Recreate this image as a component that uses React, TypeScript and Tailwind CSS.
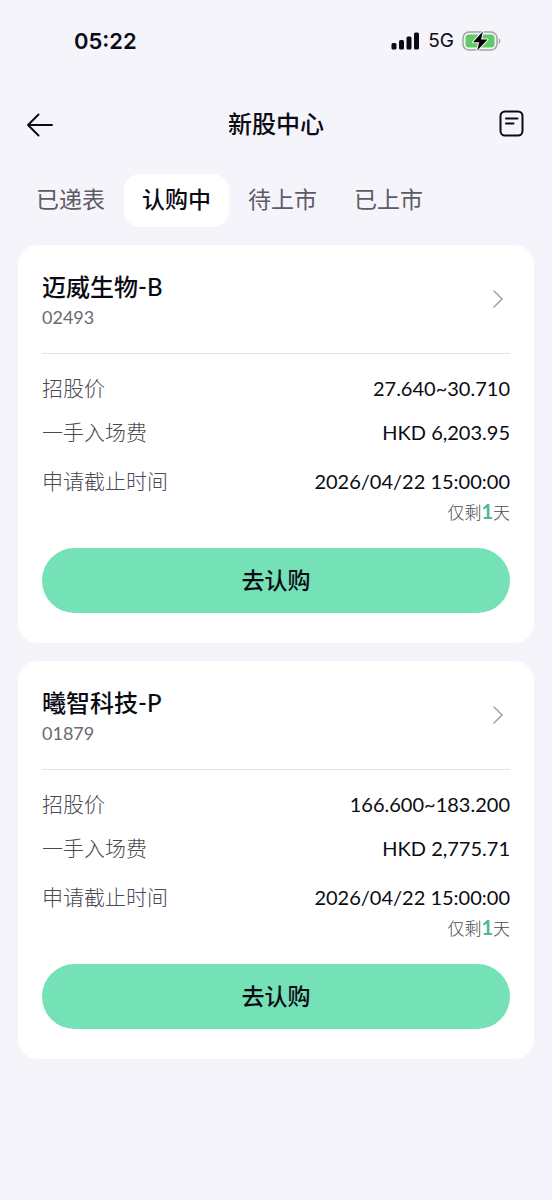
interface Stock {
  code: string;
  name: string;
  price: string;
  fee: string;
  deadline: string;
  daysLeft: number;
}

const tabs = ['已递表', '认购中', '待上市', '已上市'];

const stocks: Stock[] = [
  {
    code: '02493',
    name: '迈威生物-B',
    price: '27.640~30.710',
    fee: 'HKD 6,203.95',
    deadline: '2026/04/22 15:00:00',
    daysLeft: 1,
  },
  {
    code: '01879',
    name: '曦智科技-P',
    price: '166.600~183.200',
    fee: 'HKD 2,775.71',
    deadline: '2026/04/22 15:00:00',
    daysLeft: 1,
  },
];

function StatusBar() {
  return (
    <div className="flex h-[82px] items-center justify-between pr-[50px] pl-[74px]">
      <span className="font-['Inter',sans-serif] text-[22px] font-semibold">05:22</span>
      <div className="flex items-center gap-2">
        <svg width="29" height="18" viewBox="0 0 29 18" fill="currentColor" aria-hidden="true">
          <rect x="0.5" y="11" width="5" height="6.5" rx="1.5" />
          <rect x="8" y="8" width="5" height="9.5" rx="1.5" />
          <rect x="15.5" y="4.5" width="5" height="13" rx="1.5" />
          <rect x="23" y="0.5" width="5" height="17" rx="1.5" />
        </svg>
        <span className="font-['Inter',sans-serif] text-[19px]">5G</span>
        <svg width="40" height="22" viewBox="0 0 40 22" aria-hidden="true">
          <rect x="1" y="2" width="34" height="18" rx="6" fill="none" stroke="#a3a3a8" strokeWidth="1.5" />
          <rect x="3.5" y="4.5" width="29" height="13" rx="3.5" fill="#62cb66" />
          <path d="M36.8 8.2c2 .6 2 5 0 5.6z" fill="#a3a3a8" />
          <path
            d="M20.8 1.5 11 12.2h6.2l-2 8.3L25.5 9.5h-6.4z"
            fill="#000"
            stroke="#f5f4fb"
            strokeWidth="2"
            paintOrder="stroke"
            strokeLinejoin="round"
          />
        </svg>
      </div>
    </div>
  );
}

function Header() {
  return (
    <header className="flex h-[84px] items-center justify-between px-[26px]">
      <button type="button" aria-label="返回">
        <svg
          width="28"
          height="28"
          viewBox="0 0 28 28"
          fill="none"
          stroke="currentColor"
          strokeWidth="2"
          strokeLinecap="round"
          strokeLinejoin="round"
        >
          <path d="M26 15H2M12.5 4.5 2 15l10.5 10.5" />
        </svg>
      </button>
      <h1 className="text-[24px] font-medium">新股中心</h1>
      <button type="button" aria-label="认购记录">
        <svg
          width="28"
          height="28"
          viewBox="0 0 28 28"
          fill="none"
          stroke="currentColor"
          strokeWidth="2"
          strokeLinecap="round"
        >
          <rect x="2.5" y="1.5" width="22" height="24" rx="4.5" />
          <path d="M8 8.5h11.5M8 13.5h7.5" />
        </svg>
      </button>
    </header>
  );
}

function Tabs({ active }: { active: string }) {
  return (
    <nav className="flex gap-px px-[18px] pt-2">
      {tabs.map((tab) => (
        <button
          key={tab}
          type="button"
          className={
            tab === active
              ? 'h-[53px] rounded-2xl bg-white px-[18px] pb-0.5 text-[23px] font-medium'
              : 'h-[53px] rounded-2xl px-[18px] pb-0.5 text-[23px] text-[#5d5c66]'
          }
        >
          {tab}
        </button>
      ))}
    </nav>
  );
}

function StockCard({ stock }: { stock: Stock }) {
  return (
    <section className="rounded-[20px] bg-white px-6 pt-6 pb-[30px]">
      <a href={`#${stock.code}`} className="flex items-center justify-between border-b border-[#e3e3e6] pb-6">
        <div>
          <h2 className="text-[24px] leading-9 font-medium">{stock.name}</h2>
          <p className="text-[18px] leading-6 text-[#6a6a72]">{stock.code}</p>
        </div>
        <svg
          width="24"
          height="24"
          viewBox="0 0 24 24"
          fill="none"
          stroke="#a0a0a5"
          strokeWidth="1.5"
          strokeLinecap="round"
          aria-hidden="true"
        >
          <path d="m8 4 8 8-8 8" />
        </svg>
      </a>
      <dl className="pt-[19px] text-[20px] leading-[30px]">
        <div className="flex justify-between">
          <dt className="text-[21px] font-light text-[#4a4a54]">招股价</dt>
          <dd>{stock.price}</dd>
        </div>
        <div className="flex justify-between pt-[14px]">
          <dt className="text-[21px] font-light text-[#4a4a54]">一手入场费</dt>
          <dd>{stock.fee}</dd>
        </div>
        <div className="flex justify-between pt-[19px]">
          <dt className="text-[21px] font-light text-[#4a4a54]">申请截止时间</dt>
          <dd className="text-right">
            {stock.deadline}
            <p className="text-[17px] font-light text-[#4a4a54]">
              仅剩<span className="text-[20px] font-bold text-[#4fb98b]">{stock.daysLeft}</span>天
            </p>
          </dd>
        </div>
      </dl>
      <button type="button" className="mt-5 h-[65px] w-full rounded-full bg-[#74e2b6] text-[23px] font-medium">
        去认购
      </button>
    </section>
  );
}

export default function App() {
  return (
    <div className="min-h-screen bg-[#f5f4fb] font-['Lato','Noto_Sans_CJK_SC',sans-serif] text-[#0b0b14]">
      <StatusBar />
      <Header />
      <Tabs active="认购中" />
      <main className="flex flex-col gap-[18px] px-[18px] py-[18px]">
        {stocks.map((stock) => (
          <StockCard key={stock.code} stock={stock} />
        ))}
      </main>
    </div>
  );
}
